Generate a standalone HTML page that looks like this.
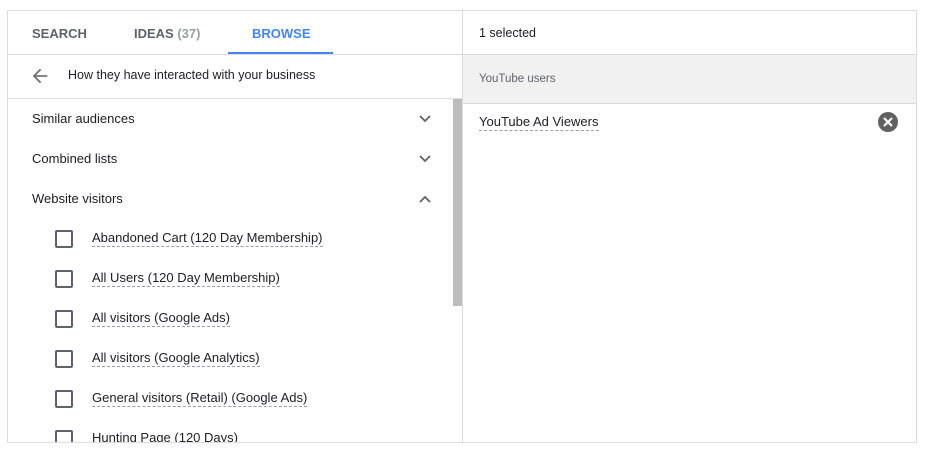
<!DOCTYPE html>
<html><head><style>
*{margin:0;padding:0;box-sizing:border-box}
body{width:925px;height:450px;background:#fff;font-family:"Liberation Sans",Arial,sans-serif;color:#3c4043;position:relative;overflow:hidden}
.box{position:absolute;left:7px;top:10px;width:910px;height:433px;border:1px solid #dadce0;overflow:hidden}
.a{position:absolute;white-space:nowrap}
.tab{font-size:13px;font-weight:bold;top:15px;color:#5f6368}
.row{font-size:13px;color:#202124}
.dash{border-bottom:1px dashed #9aa0a6;padding-bottom:1px}
.cb{position:absolute;width:18px;height:18px;border:2px solid #5f6368;border-radius:2px;left:47px}
</style></head><body>
<div class="box">
 <div class="a" style="left:454px;top:0;width:1px;height:433px;background:#dadce0"></div>
 <div class="a tab" style="left:24px">SEARCH</div>
 <div class="a tab" style="left:126px">IDEAS <span style="color:#9aa0a6">(37)</span></div>
 <div class="a tab" style="left:244px;color:#4285f4">BROWSE</div>
 <div class="a" style="left:220px;top:41px;width:105px;height:2px;background:#4285f4"></div>
 <div class="a" style="left:0;top:43px;width:454px;height:1px;background:#dadce0"></div>
 <svg class="a" style="left:21px;top:54px" width="22" height="22" viewBox="0 0 24 24"><path d="M20 11H7.8l5.6-5.6L12 4l-8 8 8 8 1.4-1.4L7.8 13H20z" fill="#757575"/></svg>
 <div class="a row" style="left:60px;top:57px;font-size:12.5px">How they have interacted with your business</div>
 <div class="a" style="left:0;top:87px;width:454px;height:1px;background:#dadce0"></div>
 <div class="a" style="left:445px;top:88px;width:9px;height:207px;background:#bdbdbd"></div>
 <div class="a row" style="left:24px;top:100px">Similar audiences</div>
 <div class="a row" style="left:24px;top:140px">Combined lists</div>
 <div class="a row" style="left:24px;top:180px">Website visitors</div>
 <svg class="a" style="left:410px;top:103px" width="14" height="10" viewBox="0 0 14 10"><path d="M2 2l5 5 5-5" stroke="#5f6368" stroke-width="1.8" fill="none"/></svg>
 <svg class="a" style="left:410px;top:143px" width="14" height="10" viewBox="0 0 14 10"><path d="M2 2l5 5 5-5" stroke="#5f6368" stroke-width="1.8" fill="none"/></svg>
 <svg class="a" style="left:410px;top:183px" width="14" height="10" viewBox="0 0 14 10"><path d="M2 8l5-5 5 5" stroke="#5f6368" stroke-width="1.8" fill="none"/></svg>
 <div class="cb" style="top:219px"></div><div class="a row" style="left:84px;top:219px"><span class="dash">Abandoned Cart (120 Day Membership)</span></div>
 <div class="cb" style="top:259px"></div><div class="a row" style="left:84px;top:259px"><span class="dash">All Users (120 Day Membership)</span></div>
 <div class="cb" style="top:299px"></div><div class="a row" style="left:84px;top:299px"><span class="dash">All visitors (Google Ads)</span></div>
 <div class="cb" style="top:339px"></div><div class="a row" style="left:84px;top:339px"><span class="dash">All visitors (Google Analytics)</span></div>
 <div class="cb" style="top:379px"></div><div class="a row" style="left:84px;top:379px"><span class="dash">General visitors (Retail) (Google Ads)</span></div>
 <div class="cb" style="top:419px"></div><div class="a row" style="left:84px;top:419px"><span class="dash">Hunting Page (120 Days)</span></div>
 <div class="a row" style="left:471px;top:15px;font-size:12.5px">1 selected</div>
 <div class="a" style="left:455px;top:43px;width:455px;height:50px;background:#f1f1f1;border-top:1px solid #dadce0;border-bottom:1px solid #dadce0"></div>
 <div class="a" style="left:471px;top:62px;font-size:11.5px;color:#5f6368">YouTube users</div>
 <div class="a row" style="left:471px;top:103px"><span class="dash">YouTube Ad Viewers</span></div>
 <svg class="a" style="left:870px;top:101px" width="20" height="20" viewBox="0 0 20 20"><circle cx="10" cy="10" r="10" fill="#616161"/><path d="M6 6l8 8M14 6l-8 8" stroke="#fff" stroke-width="2.2"/></svg>
</div>
</body></html>
